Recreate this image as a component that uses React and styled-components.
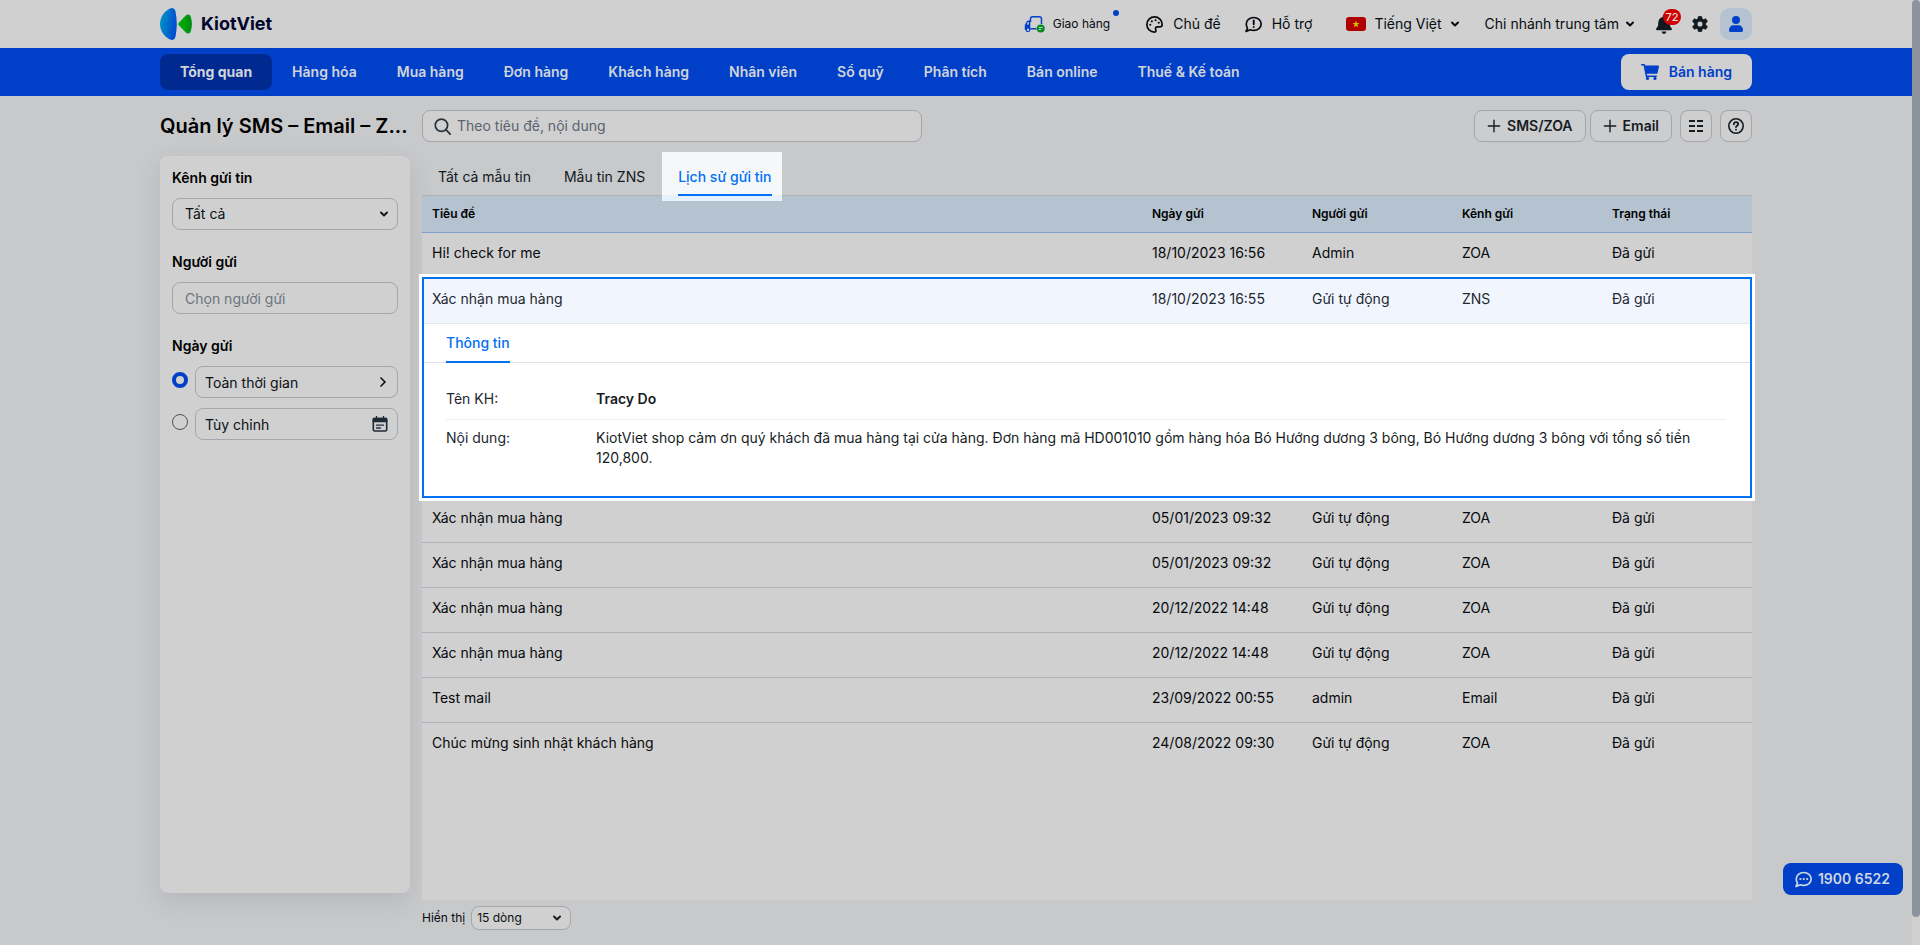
import React from "react";
import styled, { createGlobalStyle, css } from "styled-components";

const GlobalStyle = createGlobalStyle`
    *, *::before, *::after {
        box-sizing: border-box;
    }
    body {
        margin: 0;
        background: #c8c9cb;
        color: #070b10;
        font-family: Inter, "Liberation Sans", sans-serif;
        font-size: 14px;
        line-height: 20px;
    }
    button, input, select {
        font: inherit;
        color: inherit;
    }
`

const Page = styled.div`
    position: relative;
    display: flex;
    flex-direction: column;
    min-height: 100vh;
    padding-right: 8px;
`
const Scrollbar = styled.div`
    position: absolute;
    top: 0;
    right: 0;
    bottom: 0;
    width: 8px;
    background: #cfcfcf;
    &::before {
        content: "";
        display: block;
        height: 97%;
        border-radius: 4px;
        background: #8d939d;
    }
`

/* ---------- top bar ---------- */
const TopBar = styled.header`
    display: flex;
    align-items: center;
    justify-content: space-between;
    height: 48px;
    padding: 0 160px;
    background: #d0d0d0;
`
const Logo = styled.a`
    display: flex;
    align-items: center;
    gap: 9px;
    color: #00062c;
    font-size: 18px;
    font-weight: 700;
    text-decoration: none;
`
const Tools = styled.div`
    display: flex;
    align-items: center;
`
const Tool = styled.button`
    position: relative;
    display: flex;
    align-items: center;
    gap: ${p => p.$gap || 10}px;
    margin: 0 0 0 ${p => p.$left || 0}px;
    padding: 0;
    border: 0;
    background: none;
    font-size: ${p => (p.$small ? 12 : 14)}px;
    white-space: nowrap;
    cursor: pointer;
`
const NewDot = styled.span`
    position: absolute;
    top: -4px;
    right: -9px;
    width: 6px;
    height: 6px;
    border-radius: 50%;
    background: #0040c8;
`
const Badge = styled.span`
    position: absolute;
    top: -6px;
    right: -9px;
    min-width: 18px;
    height: 16px;
    border-radius: 8px;
    background: #d00000;
    color: #e8dede;
    font-size: 11px;
    font-weight: 500;
    line-height: 16px;
    text-align: center;
`
const Avatar = styled(Tool)`
    justify-content: center;
    width: 32px;
    height: 32px;
    border-radius: 10px;
    background: #b5c2d0;
`

/* ---------- menu ---------- */
const Menu = styled.nav`
    display: flex;
    align-items: center;
    justify-content: space-between;
    height: 48px;
    padding: 0 160px;
    background: #0040c8;
`
const MenuList = styled.div`
    display: flex;
`
const MenuLink = styled.a`
    padding: 8px 20px;
    border-radius: 8px;
    color: #d0d4dc;
    font-weight: ${p => (p.$active ? 700 : 600)};
    text-decoration: none;
    white-space: nowrap;
    background: ${p => (p.$active ? "#002a90" : "transparent")};
`
const SellLink = styled.a`
    display: flex;
    align-items: center;
    gap: 10px;
    height: 36px;
    padding: 0 20px;
    border-radius: 8px;
    background: #d0d0d0;
    color: #0040c8;
    font-weight: 600;
    text-decoration: none;
`

/* ---------- body ---------- */
const Body = styled.main`
    flex: 1;
    display: grid;
    grid-template-columns: 250px minmax(0, 1fr);
    grid-template-rows: 32px 1fr;
    column-gap: 12px;
    padding: 14px 160px 0;
`
const PageTitle = styled.h1`
    margin: 0;
    font-size: 20px;
    font-weight: 600;
    line-height: 32px;
    white-space: nowrap;
    color: #000;
`
const ActionBar = styled.div`
    display: flex;
    align-items: center;
    justify-content: space-between;
`
const field = css`
    height: 32px;
    border: 1px solid #a3a6ad;
    border-radius: 8px;
    background: #d0d0d0;
`
const Search = styled.label`
    ${field}
    display: flex;
    align-items: center;
    gap: 6px;
    width: 500px;
    padding: 0 11px;
    input {
        flex: 1;
        padding: 0;
        border: 0;
        outline: 0;
        background: none;
    }
    input::placeholder {
        color: #5b636e;
    }
`
const Buttons = styled.div`
    display: flex;
`
const ActionButton = styled.button`
    ${field}
    display: flex;
    align-items: center;
    justify-content: center;
    gap: 6px;
    min-width: 32px;
    margin-left: ${p => (p.$icon ? 8 : 4)}px;
    padding: 0 ${p => (p.$icon ? 0 : 12)}px;
    color: #161c24;
    font-weight: 600;
    background: ${p => (p.$icon ? "#cecece" : "#cccdce")};
    cursor: pointer;
`

/* ---------- filters ---------- */
const Sidebar = styled.aside`
    display: flex;
    flex-direction: column;
    gap: 22px;
    margin: 14px 0 52px;
    padding: 12px;
    border-radius: 8px;
    background: #d0d0d0;
    box-shadow: 0 8px 24px rgba(60, 70, 85, 0.14);
`
const Group = styled.fieldset`
    display: flex;
    flex-direction: column;
    gap: 10px;
    min-width: 0;
    margin: 0;
    padding: 0;
    border: 0;
`
const GroupLabel = styled.label`
    font-weight: 600;
    color: #000;
`
const SelectBox = styled.div`
    position: relative;
    color: #161c24;
    svg {
        position: absolute;
        top: calc(50% - 5px);
        right: 9px;
        pointer-events: none;
    }
`
const Select = styled.select`
    ${field}
    appearance: none;
    width: 100%;
    padding: 0 12px;
    color: #0b0f14;
`
const SmallSelect = styled(Select)`
    width: 100px;
    height: 24px;
    padding: 0 5px;
`
const TextInput = styled.input`
    ${field}
    width: 100%;
    padding: 0 12px;
    &::placeholder {
        color: #6c747e;
    }
`
const DateRow = styled.div`
    display: flex;
    gap: 7px;
`
const Radio = styled.input`
    appearance: none;
    flex: none;
    width: 16px;
    height: 16px;
    margin: 6px 0 0;
    border: ${p => (p.defaultChecked ? "4px solid #0040c8" : "1px solid #4a525c")};
    border-radius: 50%;
`
const DateButton = styled.button`
    ${field}
    flex: 1;
    display: flex;
    align-items: center;
    justify-content: space-between;
    padding: 2px 9px 0;
    color: #0b0f14;
    svg {
        margin-bottom: 2px;
    }
`

/* ---------- history list ---------- */
const Content = styled.section`
    display: flex;
    flex-direction: column;
    min-width: 0;
`
const Tabs = styled.div`
    display: flex;
    gap: 1px;
    height: 54px;
    padding-top: 10px;
    border-bottom: 1px solid #afb3b6;
`
const Tab = styled.button`
    position: relative;
    height: 44px;
    padding: 5px 16px 0;
    border: 0;
    background: none;
    color: ${p => (p.$active ? "#0070f4" : "#111820")};
    font-weight: ${p => (p.$active ? 500 : 400)};
    ${p => p.$active && css`
        span {
            position: relative;
            z-index: 2;
        }
        &::before {
            content: "";
            position: absolute;
            inset: 0 6px -5px 0;
            background: linear-gradient(#f6f7f9 43px, #e5f1fc 43px);
        }
        &::after {
            content: "";
            position: absolute;
            right: 16px;
            bottom: 0;
            left: 16px;
            height: 2px;
            background: #0070f4;
        }
    `}
`
const TableArea = styled.div`
    flex: 1;
    background: #d0d0d0;
`
const Table = styled.table`
    width: 100%;
    border-spacing: 0;
    table-layout: fixed;
    color: #06090d;
    th, td {
        padding: 10px 10px 14px;
        text-align: left;
        vertical-align: top;
    }
    tr td {
        border-bottom: 1px solid #adb2b7;
    }
    thead + tbody td,
    tbody:last-child tr:last-child td {
        border-bottom: 0;
    }
    thead th {
        padding: 8px 10px;
        border-bottom: 1px solid #7f9fcf;
        background: #b5c2d0;
        color: #000;
        font-size: 12px;
        font-weight: 600;
    }
`
const OpenGroup = styled.tbody`
    position: relative;
    outline: 2px solid #0070f4;
    outline-offset: -2px;
    background: #fff;
    box-shadow: 0 0 0 3px #fff;
    color: #1f2730;
    && > tr > td {
        padding-top: 12px;
        border-bottom: 1px solid #e3e6ea;
        background: #f1f6fe;
    }
    && > tr + tr > td {
        padding: 0;
        border: 0;
        background: #fff;
    }
`
const DetailTabs = styled.div`
    height: 39px;
    padding: 0 24px;
    border-bottom: 1px solid #dcdfe3;
`
const DetailTab = styled.button`
    height: 39px;
    padding: 0;
    border: 0;
    border-bottom: 2px solid #0070f4;
    background: none;
    color: #0070f4;
    font-weight: 500;
`
const Details = styled.dl`
    margin: 0;
    padding: 18px 26px 20px 24px;
`
const DetailRow = styled.div`
    display: grid;
    grid-template-columns: 150px 1fr;
    padding: 8px 0 10px;
    & + & {
        border-top: 1px solid #eceef0;
    }
    dd {
        margin: 0;
        color: #161c24;
        font-weight: ${p => (p.$strong ? 600 : 400)};
    }
`
const Footer = styled.div`
    display: flex;
    align-items: center;
    gap: 6px;
    padding: 6px 0 15px;
    font-size: 12px;
`
const Hotline = styled.a`
    position: fixed;
    right: 17px;
    bottom: 50px;
    display: flex;
    align-items: center;
    gap: 6px;
    height: 32px;
    padding: 0 13px 0 12px;
    border-radius: 8px;
    background: #0040c8;
    color: #d0d6e4;
    font-weight: 600;
    text-decoration: none;
`

/* ---------- icons ---------- */
const Icon = ({ size = 16, children, ...rest }) => (
    <svg width={size} height={size} viewBox="0 0 16 16" fill="none" stroke="currentColor" strokeWidth="1.6" strokeLinecap="round" strokeLinejoin="round" aria-hidden="true" {...rest}>
        {children}
    </svg>
)
const Chevron = () => (
    <svg width="10" height="10" viewBox="0 0 10 10" fill="none" stroke="currentColor" strokeWidth="2" strokeLinecap="round" strokeLinejoin="round" aria-hidden="true">
        <path d="M2 3.5l3 3 3-3" />
    </svg>
)
const Plus = () => (
    <Icon size={14}><path d="M8 1.5v13M1.5 8h13" /></Icon>
)
const LogoMark = () => (
    <svg width="32" height="32" viewBox="0 0 32 32" aria-hidden="true">
        <defs>
            <linearGradient id="blueSide" x1="0" x2="1" y1="0.3" y2="0.6">
                <stop offset="0" stopColor="#0094c8" />
                <stop offset="1" stopColor="#0048d0" />
            </linearGradient>
            <linearGradient id="greenSide" x1="0" x2="1">
                <stop offset="0" stopColor="#00b400" />
                <stop offset="1" stopColor="#008c14" />
            </linearGradient>
        </defs>
        <path d="M11.500 0C4.500 2.500 0 9 0 16s4.500 13.500 11.500 16c2.500 0 3.500-1.300 4-3.500 1.700-8 1.700-17 0-25C15 1.300 14 0 11.500 0z" fill="url(#blueSide)" />
        <path d="M18.300 15.200l7.200-7.500c1.800-1.900 4.500-1.600 5.200.8 1.600 4.700 1.600 10.300 0 15-.7 2.400-3.400 2.700-5.200.8l-7.200-7.500c-.5-.5-.5-1.100 0-1.600z" fill="url(#greenSide)" />
    </svg>
)
const Truck = () => (
    <svg width="21" height="17" viewBox="0 0 21 17" fill="none" stroke="#0040c8" strokeWidth="1.5" aria-hidden="true">
        <path d="M6.500 6V3q0-2.200 2.200-2.200h6.600q2.200 0 2.200 2.200v5M6.500 12.700h6" />
        <path fillRule="evenodd" d="M6.300 4.500H4Q3 4.500 2.500 6L.8 9v5h5.500zM4.800 6v2.500H2.800l1-2.500z" fill="#0040c8" stroke="none" />
        <circle cx="4" cy="13.700" r="1.800" fill="#d0d0d0" strokeWidth="1.200" />
        <circle cx="16.700" cy="12.500" r="4" fill="#008c1e" stroke="none" />
        <path d="M14.700 11.500h4M14.700 13.500h2.500" stroke="#d0d0d0" strokeWidth="1" />
    </svg>
)
const Palette = () => (
    <Icon size={17}>
        <path d="M8 .8a7.200 7.200 0 1 0 0 14.400c1.600 0 1.500-1.400 1.100-2.300-.6-1.500.1-2.600 1.600-2.600h2.100c1.500 0 2.400-.9 2.400-2.300C15.200 4 12 .8 8 .8z" />
        <g fill="currentColor" stroke="none">
            <circle cx="4" cy="8.200" r="1" /><circle cx="5.500" cy="5" r="1" />
            <circle cx="9" cy="4" r="1" /><circle cx="12" cy="6.300" r="1" />
        </g>
    </Icon>
)
const Support = () => (
    <Icon size={17}>
        <path d="M8.200 1.400c3.900 0 7 2.700 7 6.100s-3.100 6.100-7 6.100c-1.100 0-2.200-.2-3.100-.6L1 14.500l1.300-3.100C1.600 10.300 1.200 9 1.200 7.500c0-3.400 3.100-6.100 7-6.100z" />
        <path d="M8.200 4.300v3.400M8.200 10.300v.1" strokeWidth="1.800" />
    </Icon>
)
const Flag = () => (
    <svg width="20" height="14" viewBox="0 0 20 14" aria-hidden="true">
        <rect width="20" height="14" rx="3" fill="#b00000" />
        <path d="M10 3.500l.9 2.500h2.600l-2.100 1.600.8 2.600L10 8.700l-2.200 1.500.8-2.600L6.500 6h2.600z" fill="#d0c000" />
    </svg>
)
const Bell = () => (
    <svg width="16" height="19" viewBox="0 0 16 19" fill="#101820" aria-hidden="true">
        <path d="M8 0c.8 0 1.300.5 1.300 1.200v.7C12 2.500 13.700 4.700 13.700 7.500c0 3.200.7 4.600 1.900 5.700.8.800.3 2-.8 2H1.200c-1.100 0-1.600-1.200-.8-2 1.200-1.100 1.900-2.500 1.900-5.700 0-2.800 1.700-5 4.400-5.600v-.7C6.700.5 7.200 0 8 0zM5.700 16.600h4.600C10.200 18 9.300 19 8 19s-2.200-1-2.300-2.400z" />
    </svg>
)
const Gear = () => (
    <svg width="16" height="16" viewBox="0.4 0.1 15.200 15.200" fill="#101820" stroke="#101820" strokeWidth="0.600" strokeLinejoin="round" fillRule="evenodd" aria-hidden="true">
        <path d="M6.400.6Q8 .2 9.600.6L10 2.700l1.300.8 2.100-.8q1.100 1.200 1.600 2.800l-1.700 1.400v1.700l1.700 1.400q-.5 1.600-1.600 2.800l-2.100-.8-1.300.8-.4 2.100q-1.600.4-3.200 0L6 12.800l-1.300-.8-2.100.8Q1.500 11.600 1 10l1.700-1.400V6.900L1 5.500q.5-1.600 1.600-2.800l2.100.8L6 2.700zM8 5.100a2.700 2.700 0 1 0 0 5.400 2.700 2.700 0 0 0 0-5.400z" />
    </svg>
)
const User = () => (
    <svg width="16" height="16" viewBox="0 0 16 16" fill="#0040c8" aria-hidden="true">
        <circle cx="8" cy="4" r="4" />
        <path d="M1 14.200C1 11.300 2.800 9.200 5.500 9.200h5c2.700 0 4.500 2.100 4.500 5 0 1.100-.7 1.800-1.800 1.800H2.800C1.700 16 1 15.300 1 14.200z" />
    </svg>
)
const Cart = () => (
    <svg width="18" height="16" viewBox="0 0 18 16" fill="#0040c8" aria-hidden="true">
        <path d="M.7 0h2.500c.4 0 .7.300.8.600l.2 1h13c.5 0 .9.500.8 1l-1.500 6.600c-.1.400-.4.600-.8.600H5.800l.3 1.600h9.100c.5 0 .8.400.8.800s-.3.800-.8.800H5.500c-.4 0-.7-.3-.8-.6L2.600 1.600H.7C.3 1.600 0 1.200 0 .8S.3 0 .7 0z" />
        <circle cx="6.500" cy="14.400" r="1.600" /><circle cx="14" cy="14.400" r="1.600" />
    </svg>
)
const SearchIcon = () => (
    <Icon size={17} stroke="#28323c">
        <circle cx="7" cy="6.800" r="5.800" /><path d="M11.200 11l4 4.200" />
    </Icon>
)
const Columns = () => (
    <Icon strokeWidth="2" strokeLinecap="butt">
        <path d="M1 3h6M9 3h6M1 8h6M9 8h6M1 13h6M9 13h6" />
    </Icon>
)
const Help = () => (
    <Icon>
        <circle cx="8" cy="8" r="7.200" />
        <path d="M5.800 6.300C5.900 4.900 6.800 4.200 8 4.200s2.200.8 2.200 1.900c0 1.500-2.200 1.600-2.200 3M8 11.600v.1" strokeWidth="1.800" />
    </Icon>
)
const ChevronRight = () => (
    <Icon size={10} viewBox="0 0 10 10"><path d="M3 1l4 4-4 4" /></Icon>
)
const Calendar = () => (
    <Icon stroke="#1f2a36">
        <rect x="1.300" y="2.500" width="13.400" height="12.500" rx="1.500" />
        <path d="M1.500 2.500h13v3h-13z" fill="#1f2a36" />
        <path d="M4.500.5v2M11.500.5v2M4.500 9.200h7M4.500 12h4" strokeWidth="1.300" />
    </Icon>
)
const Chat = () => (
    <Icon size={17}>
        <path d="M8.200 1.400c3.900 0 7 2.700 7 6.100s-3.100 6.100-7 6.100c-1.100 0-2.200-.2-3.100-.6L1 14.500l1.300-3.100C1.600 10.300 1.200 9 1.200 7.500c0-3.400 3.100-6.100 7-6.100z" />
        <path d="M5 7.500h.1M8.200 7.500h.1M11.400 7.500h.1" strokeWidth="2" />
    </Icon>
)

const menu = ["Tổng quan", "Hàng hóa", "Mua hàng", "Đơn hàng", "Khách hàng", "Nhân viên", "Sổ quỹ", "Phân tích", "Bán online", "Thuế & Kế toán"]
const tabs = ["Tất cả mẫu tin", "Mẫu tin ZNS", "Lịch sử gửi tin"]
const headings = ["Tiêu đề", "Ngày gửi", "Người gửi", "Kênh gửi", "Trạng thái"]
const openRow = ["Xác nhận mua hàng", "18/10/2023 16:55", "Gửi tự động", "ZNS", "Đã gửi"]
const rows = [
    ["Xác nhận mua hàng", "05/01/2023 09:32", "Gửi tự động", "ZOA", "Đã gửi"],
    ["Xác nhận mua hàng", "05/01/2023 09:32", "Gửi tự động", "ZOA", "Đã gửi"],
    ["Xác nhận mua hàng", "20/12/2022 14:48", "Gửi tự động", "ZOA", "Đã gửi"],
    ["Xác nhận mua hàng", "20/12/2022 14:48", "Gửi tự động", "ZOA", "Đã gửi"],
    ["Test mail", "23/09/2022 00:55", "admin", "Email", "Đã gửi"],
    ["Chúc mừng sinh nhật khách hàng", "24/08/2022 09:30", "Gửi tự động", "ZOA", "Đã gửi"],
]

const Row = ({ cells }) => (
    <tr>{cells.map((c, i) => <td key={i}>{c}</td>)}</tr>
)

function Header() {
    return (
        <>
            <TopBar>
                <Logo href="#"><LogoMark />KiotViet</Logo>
                <Tools>
                    <Tool $small $gap={8}><Truck />Giao hàng<NewDot /></Tool>
                    <Tool $left={36}><Palette />Chủ đề</Tool>
                    <Tool $left={24}><Support />Hỗ trợ</Tool>
                    <Tool $left={34} $gap={8}><Flag />Tiếng Việt<Chevron /></Tool>
                    <Tool $left={25} $gap={6}>Chi nhánh trung tâm<Chevron /></Tool>
                    <Tool $left={21} aria-label="Thông báo"><Bell /><Badge>72</Badge></Tool>
                    <Tool $left={20} aria-label="Thiết lập"><Gear /></Tool>
                    <Avatar $left={12} aria-label="Tài khoản"><User /></Avatar>
                </Tools>
            </TopBar>
            <Menu>
                <MenuList>
                    {menu.map((m, i) => <MenuLink key={m} href="#" $active={i === 0}>{m}</MenuLink>)}
                </MenuList>
                <SellLink href="#"><Cart />Bán hàng</SellLink>
            </Menu>
        </>
    )
}

function Filters() {
    return (
        <Sidebar>
            <Group>
                <GroupLabel htmlFor="channel">Kênh gửi tin</GroupLabel>
                <SelectBox>
                    <Select id="channel"><option>Tất cả</option></Select>
                    <Chevron />
                </SelectBox>
            </Group>
            <Group>
                <GroupLabel htmlFor="sender">Người gửi</GroupLabel>
                <TextInput id="sender" placeholder="Chọn người gửi" />
            </Group>
            <Group>
                <GroupLabel as="div">Ngày gửi</GroupLabel>
                <DateRow>
                    <Radio type="radio" name="date" defaultChecked aria-label="Toàn thời gian" />
                    <DateButton>Toàn thời gian<ChevronRight /></DateButton>
                </DateRow>
                <DateRow>
                    <Radio type="radio" name="date" aria-label="Tùy chỉnh" />
                    <DateButton>Tùy chỉnh<Calendar /></DateButton>
                </DateRow>
            </Group>
        </Sidebar>
    )
}

function History() {
    return (
        <Content>
            <Tabs>
                {tabs.map((t, i) => <Tab key={t} $active={i === 2}><span>{t}</span></Tab>)}
            </Tabs>
            <TableArea>
                <Table>
                    <colgroup>
                        <col /><col width="160" /><col width="150" /><col width="150" /><col width="150" />
                    </colgroup>
                    <thead>
                        <tr>{headings.map(h => <th key={h}>{h}</th>)}</tr>
                    </thead>
                    <tbody>
                        <Row cells={["Hi! check for me", "18/10/2023 16:56", "Admin", "ZOA", "Đã gửi"]} />
                    </tbody>
                    <OpenGroup>
                        <Row cells={openRow} />
                        <tr>
                            <td colSpan="5">
                                <DetailTabs><DetailTab>Thông tin</DetailTab></DetailTabs>
                                <Details>
                                    <DetailRow $strong><dt>Tên KH:</dt><dd>Tracy Do</dd></DetailRow>
                                    <DetailRow>
                                        <dt>Nội dung:</dt>
                                        <dd>KiotViet shop cảm ơn quý khách đã mua hàng tại cửa hàng. Đơn hàng mã HD001010 gồm hàng hóa Bó Hướng dương 3 bông, Bó Hướng dương 3 bông với tổng số tiền 120,800.</dd>
                                    </DetailRow>
                                </Details>
                            </td>
                        </tr>
                    </OpenGroup>
                    <tbody>
                        {rows.map((r, i) => <Row key={i} cells={r} />)}
                    </tbody>
                </Table>
            </TableArea>
            <Footer>
                <label htmlFor="pageSize">Hiển thị</label>
                <SelectBox>
                    <SmallSelect id="pageSize"><option>15 dòng</option></SmallSelect>
                    <Chevron />
                </SelectBox>
            </Footer>
        </Content>
    )
}

export default function App() {
    return (
        <Page>
            <GlobalStyle />
            <Header />
            <Body>
                <PageTitle>Quản lý SMS – Email – Z...</PageTitle>
                <ActionBar>
                    <Search>
                        <SearchIcon />
                        <input type="text" placeholder="Theo tiêu đề, nội dung" aria-label="Tìm kiếm" />
                    </Search>
                    <Buttons>
                        <ActionButton><Plus />SMS/ZOA</ActionButton>
                        <ActionButton><Plus />Email</ActionButton>
                        <ActionButton $icon aria-label="Cột hiển thị"><Columns /></ActionButton>
                        <ActionButton $icon aria-label="Trợ giúp"><Help /></ActionButton>
                    </Buttons>
                </ActionBar>
                <Filters />
                <History />
            </Body>
            <Hotline href="tel:19006522"><Chat />1900 6522</Hotline>
            <Scrollbar />
        </Page>
    )
}
